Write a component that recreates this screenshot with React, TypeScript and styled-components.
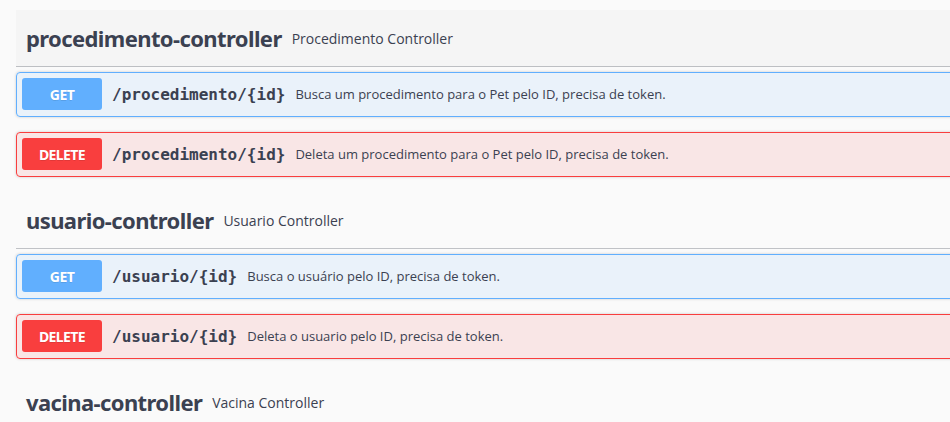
import React from "react";
import styled, { createGlobalStyle } from "styled-components";

const Global = createGlobalStyle`
  html, body { margin: 0; padding: 0; background: #fafafa; overflow: hidden; }
  body { font-family: "Open Sans", sans-serif; color: #3b4151; }
`;

const Page = styled.div`
  padding: 10px 0 0 16px;
  width: 1000px;
`;

const TagSection = styled.section`
  display: flex;
  flex-direction: column;
`;

const TagHeader = styled.h3<{ $hover?: boolean }>`
  display: flex;
  align-items: center;
  margin: 0 0 5px;
  padding: 10px 20px 10px 10px;
  height: 36px;
  border-bottom: 1px solid rgba(59, 65, 81, 0.3);
  background: ${(p) => (p.$hover ? "rgba(0,0,0,0.02)" : "transparent")};
  font-family: "Noto Sans", "Open Sans", sans-serif;
  font-size: 22px;
  font-weight: 700;
  color: #3b4151;
`;

const TagName = styled.span`
  letter-spacing: -0.6px;
`;

const TagDesc = styled.small`
  flex: 1;
  padding: 0 10px;
  font-family: "Open Sans", sans-serif;
  font-size: 14px;
  font-weight: 400;
  letter-spacing: 0;
`;

const methodColors = {
  GET: { main: "#61affe", bg: "rgba(97,175,254,0.1)" },
  DELETE: { main: "#f93e3e", bg: "rgba(249,62,62,0.1)" },
};

type Method = keyof typeof methodColors;

const OpBlock = styled.div<{ $m: Method }>`
  margin: 0 0 15px;
  border: 1px solid ${(p) => methodColors[p.$m].main};
  background: ${(p) => methodColors[p.$m].bg};
  border-radius: 4px;
  box-shadow: 0 0 3px rgba(0, 0, 0, 0.19);
`;

const Summary = styled.div`
  display: flex;
  align-items: center;
  padding: 5px 5px 6px;
`;

const MethodBadge = styled.span<{ $m: Method }>`
  display: inline-flex;
  align-items: center;
  justify-content: center;
  min-width: 80px;
  height: 32px;
  border-radius: 3px;
  background: ${(p) => methodColors[p.$m].main};
  color: #fff;
  font-family: "Noto Sans", "Open Sans", sans-serif;
  font-size: 14px;
  font-weight: 700;
  letter-spacing: -0.6px;
  text-shadow: 0 1px 0 rgba(0, 0, 0, 0.1);
`;

const Path = styled.span`
  padding: 0 10px;
  font-family: "DejaVu Sans Mono", "Liberation Mono", monospace;
  font-size: 16px;
  font-weight: 700;
  color: #3b4151;
`;

const Desc = styled.span`
  font-family: "Open Sans", sans-serif;
  font-size: 13px;
  color: #3b4151;
`;

type Op = { m: Method; path: string; desc: string };
type Tag = { name: string; desc: string; hover?: boolean; ops: Op[] };

const tags: Tag[] = [
  {
    name: "procedimento-controller",
    desc: "Procedimento Controller",
    hover: true,
    ops: [
      { m: "GET", path: "/procedimento/{id}", desc: "Busca um procedimento para o Pet pelo ID, precisa de token." },
      { m: "DELETE", path: "/procedimento/{id}", desc: "Deleta um procedimento para o Pet pelo ID, precisa de token." },
    ],
  },
  {
    name: "usuario-controller",
    desc: "Usuario Controller",
    ops: [
      { m: "GET", path: "/usuario/{id}", desc: "Busca o usuário pelo ID, precisa de token." },
      { m: "DELETE", path: "/usuario/{id}", desc: "Deleta o usuario pelo ID, precisa de token." },
    ],
  },
  { name: "vacina-controller", desc: "Vacina Controller", ops: [] },
];

export default function App() {
  return (
    <>
      <Global />
      <Page>
        {tags.map((t) => (
          <TagSection key={t.name}>
            <TagHeader $hover={t.hover}>
              <TagName>{t.name}</TagName>
              <TagDesc>{t.desc}</TagDesc>
            </TagHeader>
            {t.ops.map((o, i) => (
              <OpBlock key={i} $m={o.m}>
                <Summary>
                  <MethodBadge $m={o.m}>{o.m}</MethodBadge>
                  <Path>{o.path}</Path>
                  <Desc>{o.desc}</Desc>
                </Summary>
              </OpBlock>
            ))}
          </TagSection>
        ))}
      </Page>
    </>
  );
}
